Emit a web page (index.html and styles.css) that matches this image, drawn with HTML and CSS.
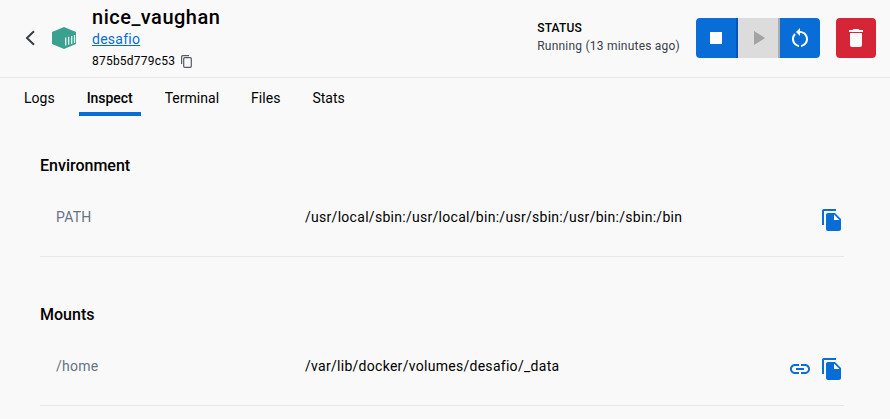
FILE: index.html
```html
<!DOCTYPE html>
<html lang="en">
<head>
<meta charset="utf-8">
<title>nice_vaughan</title>
<link rel="stylesheet" href="styles.css">
</head>
<body>
<header class="header">
  <svg class="back" viewBox="0 0 12 16"><path d="M10 1.3 3 8l7 6.7"/></svg>
  <svg class="cube" viewBox="0 0 24 22"><path class="cube-body" d="M12 0 24 5v12l-12 5L0 17V5z"/><path class="cube-bars" d="M13.7 10.500v8M16.700 9.700v8M19.700 9v8M22.500 8v8"/></svg>
  <div class="identity">
    <h1 class="name">nice_vaughan</h1>
    <a class="image" href="#">desafio</a>
    <div class="id"><span>875b5d779c53</span><svg class="copy-id" viewBox="0 0 11 13"><path d="M.6 9V1.700Q.6.600 1.700.600H8"/><rect x="2.700" y="2.700" width="7.600" height="9.600" rx="1"/></svg></div>
  </div>
  <div class="status">
    <div class="status-label">STATUS</div>
    <div class="status-text">Running (13 minutes ago)</div>
  </div>
  <div class="group">
    <button class="btn stop" aria-label="Stop"><svg class="icon" viewBox="0 0 24 24"><path d="M6 6h12v12H6z"/></svg></button>
    <button class="btn play" aria-label="Start" disabled><svg class="icon" viewBox="0 0 24 24"><path d="M8 5v14l11-7z"/></svg></button>
    <button class="btn restart" aria-label="Restart"><svg class="icon" viewBox="0 0 24 24"><path d="M12 5V2L8 6l4 4V7c3.310 0 6 2.690 6 6 0 2.970-2.170 5.430-5 5.910v2.020c3.950-.490 7-3.850 7-7.930 0-4.420-3.580-8-8-8zM6 13c0-1.650.670-3.150 1.760-4.240L6.340 7.340C4.900 8.790 4 10.790 4 13c0 4.080 3.050 7.440 7 7.930v-2.020c-2.830-.480-5-2.940-5-5.910z"/></svg></button>
  </div>
  <button class="btn delete" aria-label="Delete"><svg class="icon" viewBox="0 0 24 24"><path d="M6 19c0 1.100.900 2 2 2h8c1.100 0 2-.900 2-2V7H6v12zM19 4h-3.500l-1-1h-5l-1 1H5v2h14V4z"/></svg></button>
</header>
<nav class="tabs">
  <a class="tab">Logs</a>
  <a class="tab active">Inspect</a>
  <a class="tab">Terminal</a>
  <a class="tab">Files</a>
  <a class="tab">Stats</a>
</nav>
<main class="content">
  <section class="section">
    <h2 class="heading">Environment</h2>
    <div class="row">
      <span class="key">PATH</span>
      <span class="value">/usr/local/sbin:/usr/local/bin:/usr/sbin:/usr/bin:/sbin:/bin</span>
      <span class="actions"><svg class="icon" viewBox="0 0 24 24"><path d="M16 1H4c-1.100 0-2 .900-2 2v14h2V3h12V1zm-1 4 6 6v10c0 1.100-.900 2-2 2H7.990C6.890 23 6 22.100 6 21V7c0-1.100.890-2 1.990-2H15zm-1 7h5.500L14 6.500V12z"/></svg></span>
    </div>
  </section>
  <section class="section">
    <h2 class="heading">Mounts</h2>
    <div class="row">
      <span class="key">/home</span>
      <span class="value">/var/lib/docker/volumes/desafio/_data</span>
      <span class="actions"><svg class="icon" viewBox="0 0 24 24"><path d="M3.900 12c0-1.710 1.390-3.100 3.100-3.100h4V7H7c-2.760 0-5 2.240-5 5s2.240 5 5 5h4v-1.900H7c-1.710 0-3.100-1.390-3.100-3.100zM8 13h8v-2H8v2zm9-6h-4v1.900h4c1.710 0 3.100 1.390 3.100 3.100s-1.390 3.100-3.100 3.100h-4V17h4c2.760 0 5-2.240 5-5s-2.240-5-5-5z"/></svg><svg class="icon" viewBox="0 0 24 24"><path d="M16 1H4c-1.100 0-2 .900-2 2v14h2V3h12V1zm-1 4 6 6v10c0 1.100-.900 2-2 2H7.990C6.890 23 6 22.100 6 21V7c0-1.100.890-2 1.990-2H15zm-1 7h5.500L14 6.500V12z"/></svg></span>
    </div>
  </section>
</main>
</body>
</html>
```
FILE: styles.css
```css
* { box-sizing: border-box; }
body {
  margin: 0;
  background: #f9f9f9;
  color: #000;
  font: 14px/20px Roboto, sans-serif;
}
svg { display: block; flex: none; }
.icon { width: 24px; height: 24px; fill: currentColor; }
.header {
  display: flex;
  align-items: flex-start;
  height: 78px;
  padding: 0 14px 0 24px;
  border-bottom: 1px solid #e8e8e8;
}
.back { width: 12px; height: 16px; margin-top: 30px; fill: none; stroke: #393f49; stroke-width: 2; }
.cube { width: 24px; height: 22px; margin: 27px 16px 0; }
.cube-body { fill: #3aa18e; }
.cube-bars { fill: none; stroke: #e4f3f0; stroke-width: 1.3; }
.identity { padding-top: 5px; }
.name { margin: 0; font-size: 20px; line-height: 24px; font-weight: 500; letter-spacing: .5px; }
.image { display: block; line-height: 20px; color: #086dd7; letter-spacing: .25px; text-decoration: underline; }
.id { display: flex; align-items: center; gap: 6px; margin-top: 2px; font-size: 12px; letter-spacing: .22px; }
.copy-id { width: 11px; height: 13px; fill: none; stroke: #555b65; stroke-width: 1.2; }
.status { margin: 19px 16px 0 auto; font-size: 12px; line-height: 18px; }
.status-label { font-weight: 500; letter-spacing: .2px; }
.status-text { color: #393f49; letter-spacing: .22px; }
.group { display: flex; margin: 18px 16px 0 0; border-radius: 4px; overflow: hidden; }
.btn {
  display: flex;
  align-items: center;
  justify-content: center;
  width: 40px;
  height: 40px;
  padding: 0;
  border: 0;
  background: #086dd7;
  color: #fff;
}
.stop { width: 42px; border-right: 2px solid #0055bc; }
.play { width: 42px; border-right: 2px solid #adadad; background: #dcdcdc; color: #a3a3a3; }
.delete { margin-top: 18px; border-radius: 4px; background: #d52536; }
.tabs { display: flex; gap: 16px; height: 38px; padding-left: 16px; }
.tab { padding: 10px 8px 0; letter-spacing: .02px; }
.active { border-bottom: 4px solid #086dd7; font-weight: 500; letter-spacing: -.05px; }
.content { padding: 40px 46px 0 40px; }
.section + .section { margin-top: 48px; }
.heading { margin: 0; font-size: 16px; line-height: 20px; font-weight: 500; letter-spacing: 0; }
.row {
  display: flex;
  align-items: flex-start;
  height: 63px;
  margin-top: 18px;
  padding: 13px 0 0 16px;
  border-bottom: 1px solid #e8e8e8;
}
.key { width: 249px; color: #677285; letter-spacing: .25px; }
.value { letter-spacing: .285px; }
.actions { display: flex; gap: 8px; margin: 1px 0 0 auto; color: #086dd7; }
```
